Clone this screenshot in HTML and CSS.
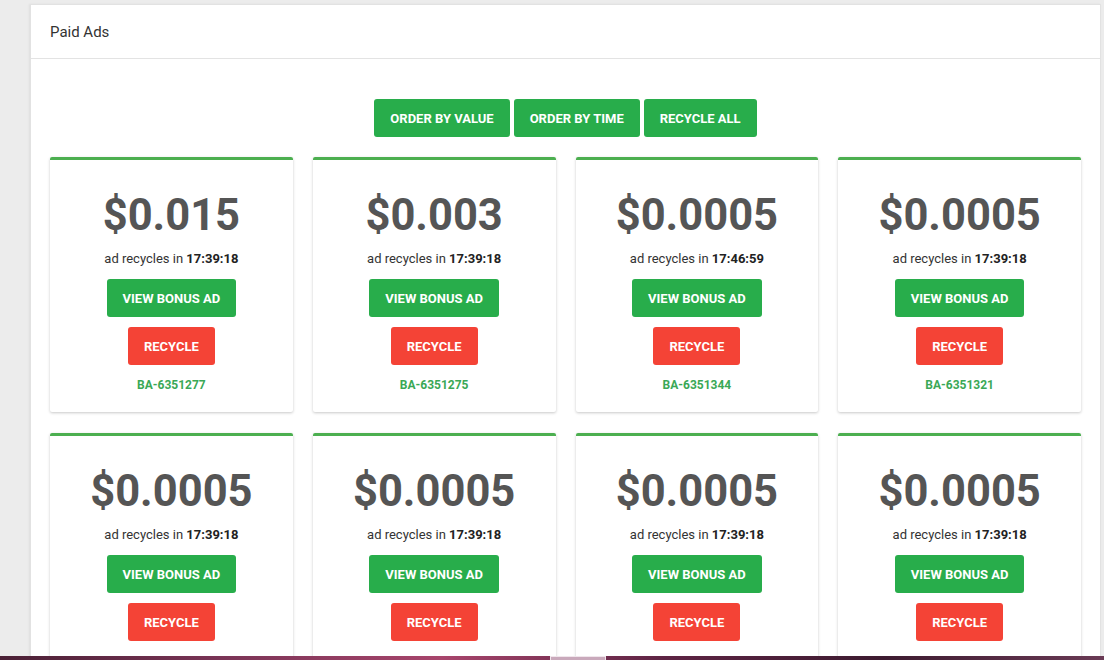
FILE: index.html
```html
<!DOCTYPE html>
<html lang="en">
<head>
    <meta charset="UTF-8">
    <meta name="viewport" content="width=device-width, initial-scale=1.0">
    <title>Paid Ads</title>
    <link rel="stylesheet" href="styles.css">
</head>
<body>
    <div class="page">
        <div class="panel">
            <div class="panel-header">Paid Ads</div>

            <div class="panel-body">
                <div class="toolbar">
                    <button class="btn btn-green">Order by value</button>
                    <button class="btn btn-green">Order by time</button>
                    <button class="btn btn-green">Recycle all</button>
                </div>

                <div class="ads">
                    <div class="ad">
                        <div class="ad-value">$0.015</div>
                        <p class="ad-timer">ad recycles in <strong>17:39:18</strong></p>
                        <button class="btn btn-green">View bonus ad</button>
                        <button class="btn btn-red">Recycle</button>
                        <div class="ad-id">BA-6351277</div>
                    </div>
                    <div class="ad">
                        <div class="ad-value">$0.003</div>
                        <p class="ad-timer">ad recycles in <strong>17:39:18</strong></p>
                        <button class="btn btn-green">View bonus ad</button>
                        <button class="btn btn-red">Recycle</button>
                        <div class="ad-id">BA-6351275</div>
                    </div>
                    <div class="ad">
                        <div class="ad-value">$0.0005</div>
                        <p class="ad-timer">ad recycles in <strong>17:46:59</strong></p>
                        <button class="btn btn-green">View bonus ad</button>
                        <button class="btn btn-red">Recycle</button>
                        <div class="ad-id">BA-6351344</div>
                    </div>
                    <div class="ad">
                        <div class="ad-value">$0.0005</div>
                        <p class="ad-timer">ad recycles in <strong>17:39:18</strong></p>
                        <button class="btn btn-green">View bonus ad</button>
                        <button class="btn btn-red">Recycle</button>
                        <div class="ad-id">BA-6351321</div>
                    </div>

                    <div class="ad">
                        <div class="ad-value">$0.0005</div>
                        <p class="ad-timer">ad recycles in <strong>17:39:18</strong></p>
                        <button class="btn btn-green">View bonus ad</button>
                        <button class="btn btn-red">Recycle</button>
                    </div>
                    <div class="ad">
                        <div class="ad-value">$0.0005</div>
                        <p class="ad-timer">ad recycles in <strong>17:39:18</strong></p>
                        <button class="btn btn-green">View bonus ad</button>
                        <button class="btn btn-red">Recycle</button>
                    </div>
                    <div class="ad">
                        <div class="ad-value">$0.0005</div>
                        <p class="ad-timer">ad recycles in <strong>17:39:18</strong></p>
                        <button class="btn btn-green">View bonus ad</button>
                        <button class="btn btn-red">Recycle</button>
                    </div>
                    <div class="ad">
                        <div class="ad-value">$0.0005</div>
                        <p class="ad-timer">ad recycles in <strong>17:39:18</strong></p>
                        <button class="btn btn-green">View bonus ad</button>
                        <button class="btn btn-red">Recycle</button>
                    </div>
                </div>
            </div>
        </div>
    </div>

    <!-- desktop taskbar peeking in at the bottom of the capture -->
    <div class="taskbar">
        <div class="taskbar-item"></div>
    </div>
</body>
</html>
```

FILE: styles.css
```css
html, body {
    height: 100%;
}

body {
    margin: 0;
    font-family: Roboto, 'Liberation Sans', Arial, sans-serif;
    background-color: #ececec;
    color: #333;
    overflow: hidden;
}

.page {
    padding: 4px 3px 0 30px;
}

.panel {
    background-color: #fff;
    border: 1px solid #e2e2e2;
    border-bottom: none;
    box-shadow: -1px 0 2px rgba(0, 0, 0, 0.06);
}

.panel-header {
    height: 53px;
    line-height: 55px;
    padding: 0 19px;
    font-size: 15px;
    color: #333;
    border-bottom: 1px solid #e3e3e3;
}

.panel-body {
    padding: 40px 19px 20px;
}

.toolbar {
    display: flex;
    justify-content: center;
    gap: 4px;
    margin-bottom: 20px;
}

.btn {
    font-family: Roboto, 'Liberation Sans', Arial, sans-serif;
    font-size: 13px;
    font-weight: 700;
    text-transform: uppercase;
    color: #fff;
    height: 38px;
    padding: 0 16px;
    border: none;
    border-radius: 3px;
    cursor: pointer;
}

.btn-green {
    background-color: #28ad4b;
}

.btn-red {
    background-color: #f44336;
}

.ads {
    display: grid;
    grid-template-columns: repeat(4, 1fr);
    gap: 21px 20px;
}

.ad {
    display: flex;
    flex-direction: column;
    align-items: center;
    border-top: 3px solid #4caf50;
    border-radius: 2px;
    padding: 29px 10px 18px;
    box-shadow: 0 1px 3px rgba(0, 0, 0, 0.22);
}

.ad-value {
    font-size: 43.5px;
    font-weight: 700;
    line-height: 54px;
    color: #555;
}

.ad-timer {
    margin: 6px 0 10px;
    font-size: 13px;
    line-height: 20px;
    color: #333;
}

.ad-timer strong {
    color: #222;
}

.ad .btn-red {
    margin-top: 10px;
}

.ad-id {
    margin-top: 11px;
    font-size: 12px;
    font-weight: 700;
    line-height: 18px;
    color: #3aa856;
}

.taskbar {
    position: fixed;
    left: 0;
    right: 0;
    bottom: 0;
    height: 4px;
    background: linear-gradient(90deg, #4a2035, #7a3456 20%, #a8456c 40%, #5e2444 60%, #3d1b30 80%, #6a3a55);
}

.taskbar-item {
    position: absolute;
    left: 550px;
    width: 56px;
    top: 0;
    bottom: 0;
    background-color: #c9a9bb;
    border: 1px solid #f0e6ec;
    border-bottom: none;
    box-sizing: border-box;
}
```
